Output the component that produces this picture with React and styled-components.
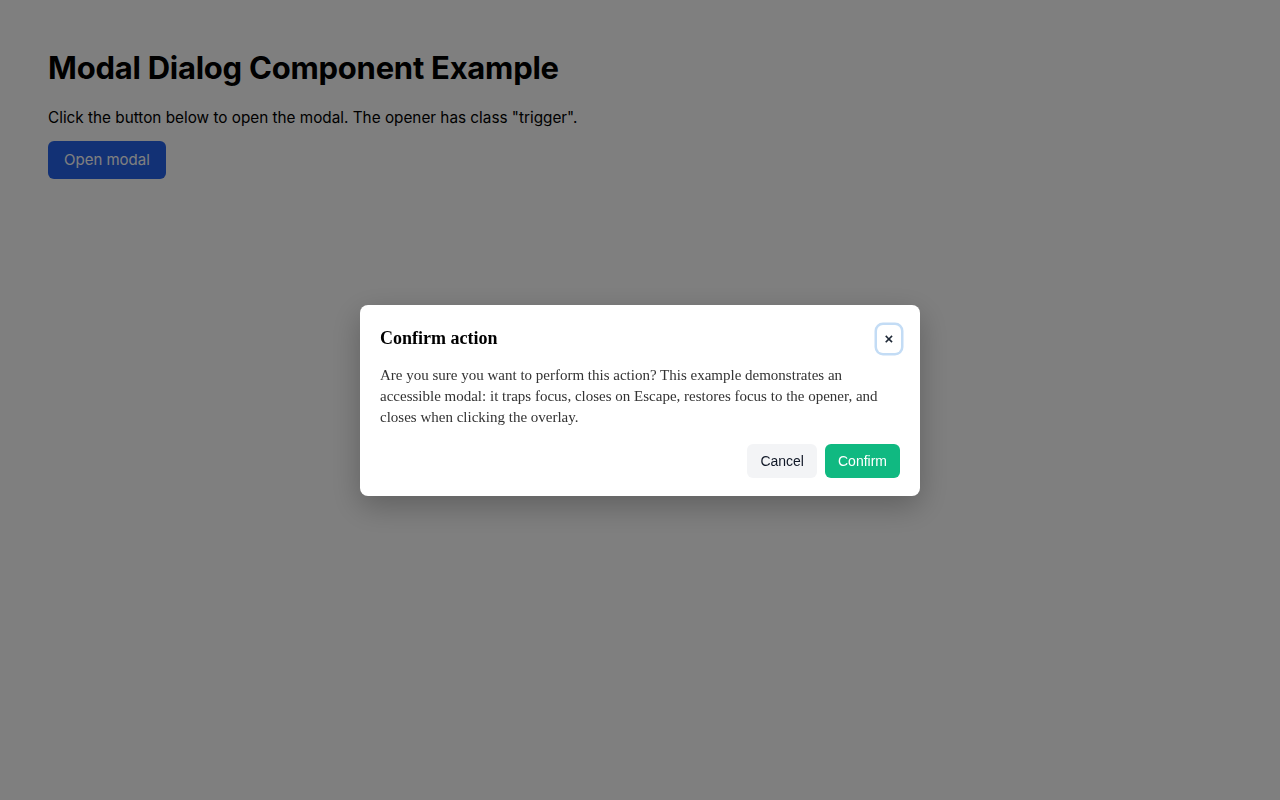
import React from "react";
import styled, { createGlobalStyle } from "styled-components";

const Global = createGlobalStyle`
  html, body { margin: 0; padding: 0; background: #ffffff; }
  body { font-family: Inter, "Liberation Sans", Arial, sans-serif; color: #000; }
  #root { min-height: 100vh; }
`;

const Page = styled.main`
  padding: 46px 48px;
`;

const Title = styled.h1`
  margin: 0 0 18px;
  font-size: 31px;
  line-height: 1.4;
  font-weight: 700;
  letter-spacing: -0.25px;
`;

const Lead = styled.p`
  margin: 0 0 11px;
  font-size: 15.3px;
  line-height: 1.5;
`;

const Trigger = styled.button`
  font-family: Inter, "Liberation Sans", Arial, sans-serif;
  font-size: 15px;
  line-height: 22px;
  padding: 8px 16px;
  border: 0;
  border-radius: 6px;
  background: #2563eb;
  color: #ffffff;
  cursor: pointer;
`;

const Overlay = styled.div`
  position: fixed;
  inset: 0;
  background: rgba(0, 0, 0, 0.5);
  display: flex;
  align-items: center;
  justify-content: center;
`;

const Dialog = styled.div`
  width: 560px;
  box-sizing: border-box;
  background: #ffffff;
  border-radius: 8px;
  padding: 20px 20px 18px;
  box-shadow: 0 10px 30px rgba(0, 0, 0, 0.25);
  font-family: "Liberation Serif", "Times New Roman", serif;
`;

const Header = styled.div`
  display: flex;
  align-items: center;
  justify-content: space-between;
`;

const DialogTitle = styled.h2`
  margin: 0;
  font-size: 18px;
  font-weight: 700;
  color: #000;
`;

const CloseButton = styled.button`
  width: 24px;
  height: 28px;
  padding: 0;
  border: 0;
  border-radius: 6px;
  background: #ffffff;
  color: #1f2937;
  font-family: "Liberation Sans", Arial, sans-serif;
  font-size: 15px;
  font-weight: 700;
  line-height: 1;
  display: flex;
  align-items: center;
  justify-content: center;
  box-shadow: 0 0 0 2.5px #c3dcf5;
  margin-right: -1px;
  cursor: pointer;
`;

const Body = styled.p`
  margin: 12px 0 0;
  font-size: 15px;
  line-height: 21px;
  color: #333333;
`;

const Footer = styled.div`
  display: flex;
  justify-content: flex-end;
  gap: 8px;
  margin-top: 16px;
`;

const ActionButton = styled.button`
  font-family: "Liberation Sans", Arial, sans-serif;
  font-size: 14px;
  line-height: 16px;
  height: 34px;
  padding: 8px 12px;
  border: 1px solid transparent;
  border-radius: 6px;
  cursor: pointer;
  background: ${(p) => (p.$primary ? "#10b981" : "#f3f4f6")};
  color: ${(p) => (p.$primary ? "#ffffff" : "#111827")};
`;

export default function App() {
  return (
    <>
      <Global />
      <Page>
        <Title>Modal Dialog Component Example</Title>
        <Lead>Click the button below to open the modal. The opener has class "trigger".</Lead>
        <Trigger className="trigger">Open modal</Trigger>
      </Page>
      <Overlay>
        <Dialog role="dialog" aria-modal="true" aria-labelledby="dlg-title">
          <Header>
            <DialogTitle id="dlg-title">Confirm action</DialogTitle>
            <CloseButton aria-label="Close">×</CloseButton>
          </Header>
          <Body>
            Are you sure you want to perform this action? This example demonstrates an
            accessible modal: it traps focus, closes on Escape, restores focus to the opener, and
            closes when clicking the overlay.
          </Body>
          <Footer>
            <ActionButton>Cancel</ActionButton>
            <ActionButton $primary>Confirm</ActionButton>
          </Footer>
        </Dialog>
      </Overlay>
    </>
  );
}
